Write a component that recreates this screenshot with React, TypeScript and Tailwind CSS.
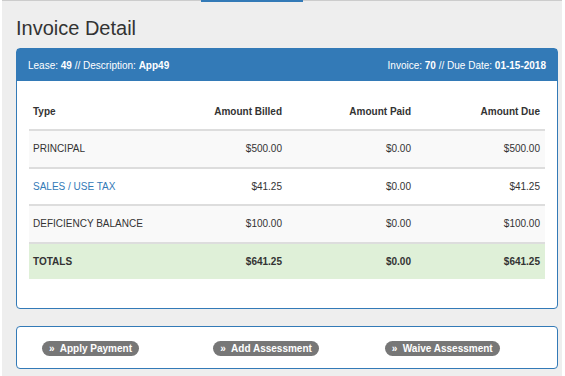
import React from "react";

type Row = {
  type: string;
  billed: string;
  paid: string;
  due: string;
  link?: boolean;
};

const rows: Row[] = [
  { type: "PRINCIPAL", billed: "$500.00", paid: "$0.00", due: "$500.00" },
  { type: "SALES / USE TAX", billed: "$41.25", paid: "$0.00", due: "$41.25", link: true },
  { type: "DEFICIENCY BALANCE", billed: "$100.00", paid: "$0.00", due: "$100.00" },
];

const actions = ["Apply Payment", "Add Assessment", "Waive Assessment"];

const App: React.FC = () => {
  return (
    <div className="bg-white w-[565px] h-[376px] overflow-hidden font-['Liberation_Sans',Arial,sans-serif] text-[#333333]">
      <div className="ml-[2px] mr-[3px] h-full bg-[#eeeeee]">
        {/* top tabs line */}
        <div className="flex h-[2px]">
          <div className="w-[199px] border-t border-[#cccccc]"></div>
          <div className="w-[102px] bg-[#337ab7]"></div>
          <div className="flex-1 border-t border-[#cccccc]"></div>
        </div>

        <div className="pl-[14px] pr-[4px] pt-[14px]">
          <h1 className="text-[20px] leading-[24px] mb-[8px]">Invoice Detail</h1>

          <div className="border border-[#337ab7] rounded-[4px] bg-white">
            <div className="h-[32px] bg-[#337ab7] flex items-center justify-between px-[11px] text-[10px] text-white">
              <div>
                Lease: <b>49</b> // Description: <b>App49</b>
              </div>
              <div>
                Invoice: <b>70</b> // Due Date: <b>01-15-2018</b>
              </div>
            </div>

            <div className="pt-[12px] pb-[29px] px-[12px]">
              <div className="text-[10px]">
                <div className="grid grid-cols-4 h-[38px] items-center font-bold border-b-2 border-[#dddddd]">
                  <div className="px-[4px]">Type</div>
                  <div className="px-[5px] text-right">Amount Billed</div>
                  <div className="px-[5px] text-right">Amount Paid</div>
                  <div className="px-[5px] text-right">Amount Due</div>
                </div>
                {rows.map((r, i) => (
                  <div
                    key={r.type}
                    className={
                      "grid grid-cols-4 h-[37.5px] items-center border-b-2 border-[#dddddd] " +
                      (i % 2 === 0 ? "bg-[#f9f9f9]" : "bg-white")
                    }
                  >
                    <div className={"px-[4px] " + (r.link ? "text-[#337ab7]" : "")}>{r.type}</div>
                    <div className="px-[5px] text-right">{r.billed}</div>
                    <div className="px-[5px] text-right">{r.paid}</div>
                    <div className="px-[5px] text-right">{r.due}</div>
                  </div>
                ))}
                <div className="grid grid-cols-4 h-[35px] items-center font-bold bg-[#dff0d8]">
                  <div className="px-[4px]">TOTALS</div>
                  <div className="px-[5px] text-right">$641.25</div>
                  <div className="px-[5px] text-right">$0.00</div>
                  <div className="px-[5px] text-right">$641.25</div>
                </div>
              </div>
            </div>
          </div>

          <div className="mt-[17px] h-[43px] border border-[#337ab7] rounded-[4px] bg-white grid grid-cols-3 items-center pl-[25px] pr-[1px]">
            {actions.map((a) => (
              <div key={a}>
                <span className="inline-block bg-[#777777] text-white font-bold text-[10px] leading-[15px] px-[7px] rounded-full">
                  »&nbsp; {a}
                </span>
              </div>
            ))}
          </div>
        </div>
      </div>
    </div>
  );
};

export default App;
